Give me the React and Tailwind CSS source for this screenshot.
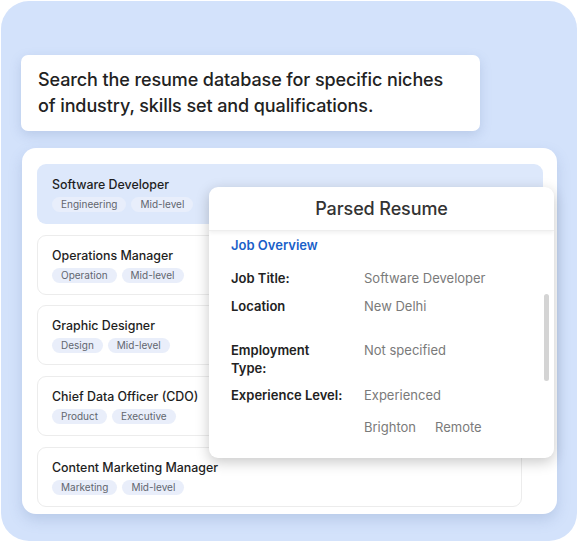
import React from 'react';

const jobs = [
    { title: 'Software Developer', tags: ['Engineering', 'Mid-level'], active: true },
    { title: 'Operations Manager', tags: ['Operation', 'Mid-level'] },
    { title: 'Graphic Designer', tags: ['Design', 'Mid-level'] },
    { title: 'Chief Data Officer (CDO)', tags: ['Product', 'Executive'] },
    { title: 'Content Marketing Manager', tags: ['Marketing', 'Mid-level'] },
];

const JobCard = ({ job }) => (
    <div
        className={`h-[60px] rounded-[9px] ${
            job.active ? 'w-[506px] bg-[#dde8fb] pl-[15px] pt-[13px]' : 'w-[485px] bg-white border border-[#ececec] pl-[14px] pt-[12px]'
        }`}
    >
        <p className="text-[12.4px] leading-4 font-[550] text-[#1e1e1e]">{job.title}</p>
        <div className="flex gap-[5px] mt-[4px]">
            {job.tags.map(tag => (
                <span
                    key={tag}
                    className={`h-[15px] px-[9px] rounded-full text-[10px] leading-[15px] text-[#62666f] ${
                        job.active ? 'bg-[#e8eefb]' : 'bg-[#e9eefa]'
                    }`}
                >
                    {tag}
                </span>
            ))}
        </div>
    </div>
);

const Row = ({ label, value, className = '' }) => (
    <div className={`flex ${className}`}>
        <p className="w-[133px] pr-2 text-[13px] leading-[18px] font-semibold text-[#222]">{label}</p>
        <p className="text-[13px] leading-[18px] text-[#7a7a7a]">{value}</p>
    </div>
);

const App = () => {
    return (
        <div className="w-[578px] h-[542px] bg-white p-px" style={{ fontFamily: 'Inter, "Noto Sans", sans-serif' }}>
            <div className="w-[576px] h-[540px] rounded-[28px] bg-[#d3e2fb] pt-[54px] pl-[20px]">
                <div className="w-[459px] h-[76px] bg-white rounded-[7px] px-[17px] flex items-center shadow-[0_4px_12px_rgba(90,120,170,0.22)]">
                    <p className="max-w-[418px] text-[18px] leading-[26px] font-medium text-[#222] tracking-[-0.1px]">
                        Search the resume database for specific niches of industry, skills set and qualifications.
                    </p>
                </div>

                <div className="relative mt-[17px] ml-px w-[535px] h-[366px] bg-white rounded-[14px] pt-[16px] pl-[15px] shadow-[0_6px_14px_rgba(90,120,170,0.22)]">
                    <div className="flex flex-col gap-[10.7px]">
                        {jobs.map(job => <JobCard key={job.title} job={job} />)}
                    </div>

                    <div className="absolute left-[187px] top-[39px] w-[345px] h-[271px] bg-white rounded-[9px] shadow-[0_4px_14px_rgba(0,0,0,0.22)] overflow-hidden">
                        <div className="h-[44px] flex items-center justify-center border-b border-[#eeeeee] shadow-[0_2px_4px_rgba(0,0,0,0.06)]">
                            <p className="text-[18px] font-medium text-[#333] tracking-[-0.1px]">Parsed Resume</p>
                        </div>
                        <div className="pl-[22px] pt-[4px]">
                            <p className="text-[13px] leading-5 font-semibold text-[#1a5fc9]">Job Overview</p>
                            <Row label="Job Title:" value="Software Developer" className="mt-[14px]" />
                            <Row label="Location" value="New Delhi" className="mt-[10px]" />
                            <Row label={<>Employment<br />Type:</>} value="Not specified" className="mt-[26px]" />
                            <Row label="Experience Level:" value="Experienced" className="mt-[9px]" />
                            <Row label="" value={<span className="flex gap-[19px]"><span>Brighton</span><span>Remote</span></span>} className="mt-[14px]" />
                        </div>
                        <div className="absolute left-[335px] top-[107px] w-[5px] h-[87px] rounded-full bg-[#d4d4d4]" />
                    </div>
                </div>
            </div>
        </div>
    );
};

export default App;
